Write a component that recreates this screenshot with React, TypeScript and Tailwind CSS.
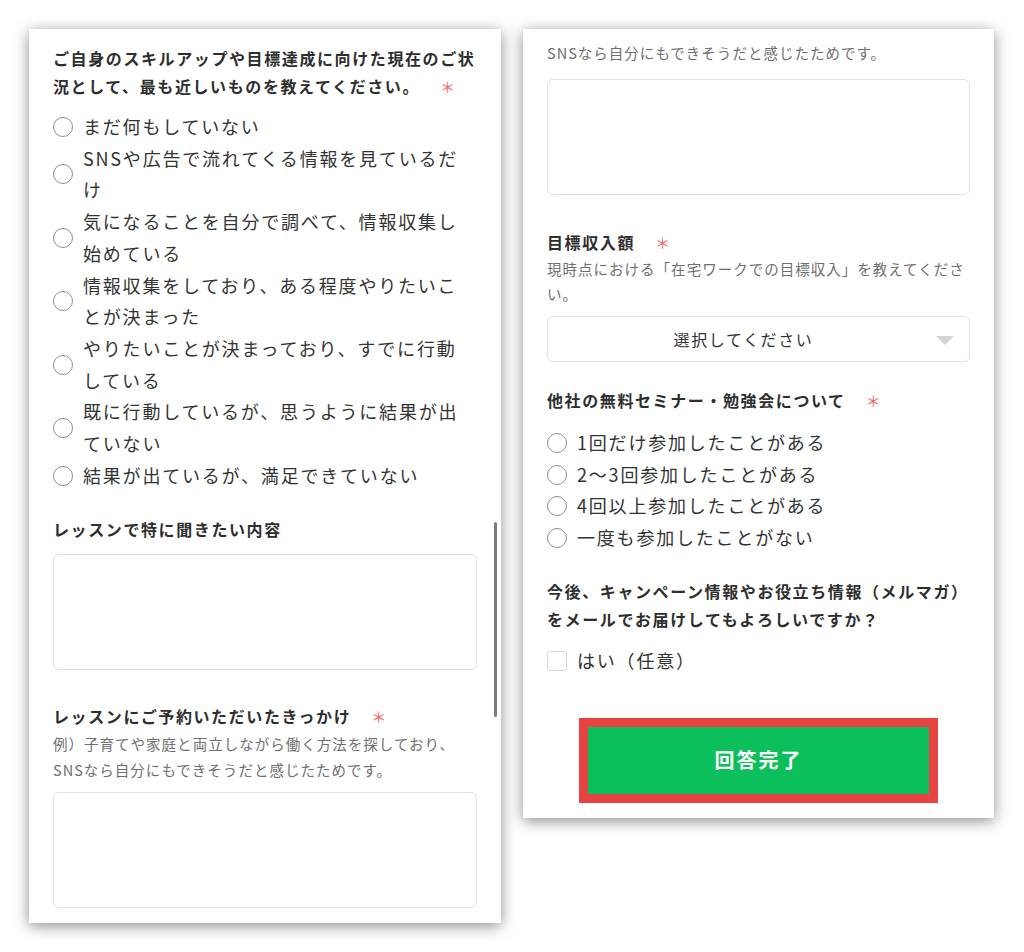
import React from 'react';

const leftOptions = [
  ['まだ何もしていない'],
  ['SNSや広告で流れてくる情報を見ているだ', 'け'],
  ['気になることを自分で調べて、情報収集し', '始めている'],
  ['情報収集をしており、ある程度やりたいこ', 'とが決まった'],
  ['やりたいことが決まっており、すでに行動', 'している'],
  ['既に行動しているが、思うように結果が出', 'ていない'],
  ['結果が出ているが、満足できていない'],
];

const seminarOptions = [
  ['1回だけ参加したことがある'],
  ['2〜3回参加したことがある'],
  ['4回以上参加したことがある'],
  ['一度も参加したことがない'],
];

function Required() {
  return <span className="ml-[20px] text-[15px] font-normal text-[#f26a6a]">＊</span>;
}

function Lines({ lines }: { lines: string[] }) {
  return (
    <>
      {lines.map((line) => (
        <span key={line} className="block whitespace-nowrap">
          {line}
        </span>
      ))}
    </>
  );
}

function Radio({ lines }: { lines: string[] }) {
  return (
    <label className="flex items-center">
      <span className="w-5 h-5 shrink-0 rounded-full border-[1.5px] border-[#8e8e8e] bg-white" />
      <span className="ml-[10px] text-[18px] leading-[31.7px] tracking-[0.1em] text-[#333]">
        <Lines lines={lines} />
      </span>
    </label>
  );
}

function Label({ lines, required }: { lines: string[]; required?: boolean }) {
  return (
    <p className="text-[16px] font-bold leading-[28px] tracking-[0.1em] text-[#2e2e2e]">
      {lines.map((line, i) => (
        <span key={line} className="block whitespace-nowrap">
          {line}
          {required && i === lines.length - 1 && <Required />}
        </span>
      ))}
    </p>
  );
}

function Helper({ lines, tight }: { lines: string[]; tight?: boolean }) {
  return (
    <p className={tight ? 'text-[14.5px] leading-[25px] tracking-[0.07em] text-[#6f6f6f]' : 'text-[14.5px] leading-[26px] tracking-[0.07em] text-[#6f6f6f]'}>
      <Lines lines={lines} />
    </p>
  );
}

function TextBox() {
  return (
    <textarea className="block w-full h-[116px] rounded-[6px] border border-[#e2e2e2] bg-white resize-none outline-none" />
  );
}

export default function App() {
  return (
    <div className="min-h-screen bg-white font-['Noto_Sans_CJK_JP',sans-serif]">
      <div className="flex items-start gap-[22px] pl-[29px] pt-[29px]">
        {/* Left panel */}
        <div className="relative w-[472px] bg-white px-6 pt-[15px] pb-[15px] shadow-[0_3px_14px_rgba(0,0,0,0.45)]">
          <Label
            lines={['ご自身のスキルアップや目標達成に向けた現在のご状', '況として、最も近しいものを教えてください。']}
            required
          />
          <div className="mt-[10px]">
            {leftOptions.map((o) => (
              <Radio key={o[0]} lines={o} />
            ))}
          </div>

          <div className="mt-[24px]">
            <Label lines={['レッスンで特に聞きたい内容']} />
          </div>
          <div className="mt-[11px]">
            <TextBox />
          </div>

          <div className="mt-[32px]">
            <Label lines={['レッスンにご予約いただいたきっかけ']} required />
            <Helper
              lines={['例）子育てや家庭と両立しながら働く方法を探しており、', 'SNSなら自分にもできそうだと感じたためです。']}
            />
          </div>
          <div className="mt-[9px]">
            <TextBox />
          </div>

          {/* scrollbar */}
          <div className="absolute right-[4px] top-[493px] h-[195px] w-[3px] rounded-full bg-[#7d7d7d]" />
        </div>

        {/* Right panel */}
        <div className="w-[471px] bg-white px-6 pt-[11px] pb-[15px] shadow-[0_3px_14px_rgba(0,0,0,0.45)]">
          <Helper lines={['SNSなら自分にもできそうだと感じたためです。']} />
          <div className="mt-[13px]">
            <TextBox />
          </div>

          <div className="mt-[34px]">
            <p className="text-[16px] font-bold leading-[26px] tracking-[0.1em] text-[#2e2e2e]">
              目標収入額
              <Required />
            </p>
            <Helper tight lines={['現時点における「在宅ワークでの目標収入」を教えてくださ', 'い。']} />
          </div>

          <div className="relative mt-[10px] flex h-[46px] items-center justify-center rounded-[6px] border border-[#e2e2e2] bg-white pr-[30px]">
            <span className="text-[16px] tracking-[0.1em] text-[#333]">選択してください</span>
            <svg className="absolute right-[15px] top-[19px]" width="18" height="9" viewBox="0 0 18 9">
              <path d="M0 0 H18 L9 9 Z" fill="#d4d4d4" />
            </svg>
          </div>

          <div className="mt-[24px]">
            <Label lines={['他社の無料セミナー・勉強会について']} required />
          </div>
          <div className="mt-[12px]">
            {seminarOptions.map((o) => (
              <Radio key={o[0]} lines={o} />
            ))}
          </div>

          <div className="mt-[23px]">
            <Label lines={['今後、キャンペーン情報やお役立ち情報（メルマガ）', 'をメールでお届けしてもよろしいですか？']} />
          </div>

          <label className="mt-[12px] flex items-center">
            <span className="w-5 h-5 shrink-0 rounded-[3px] border border-[#d6d6d6] bg-white" />
            <span className="ml-[10px] text-[18px] leading-[31.7px] tracking-[0.1em] text-[#333]">はい（任意）</span>
          </label>

          <div className="mt-[41px] flex justify-center">
            <div className="border-[9px] border-[#e94242]">
              <button className="flex h-[67px] w-[341px] items-center justify-center bg-[#0bbf5b] text-[20px] font-bold tracking-[0.1em] text-white">
                回答完了
              </button>
            </div>
          </div>
        </div>
      </div>
    </div>
  );
}
